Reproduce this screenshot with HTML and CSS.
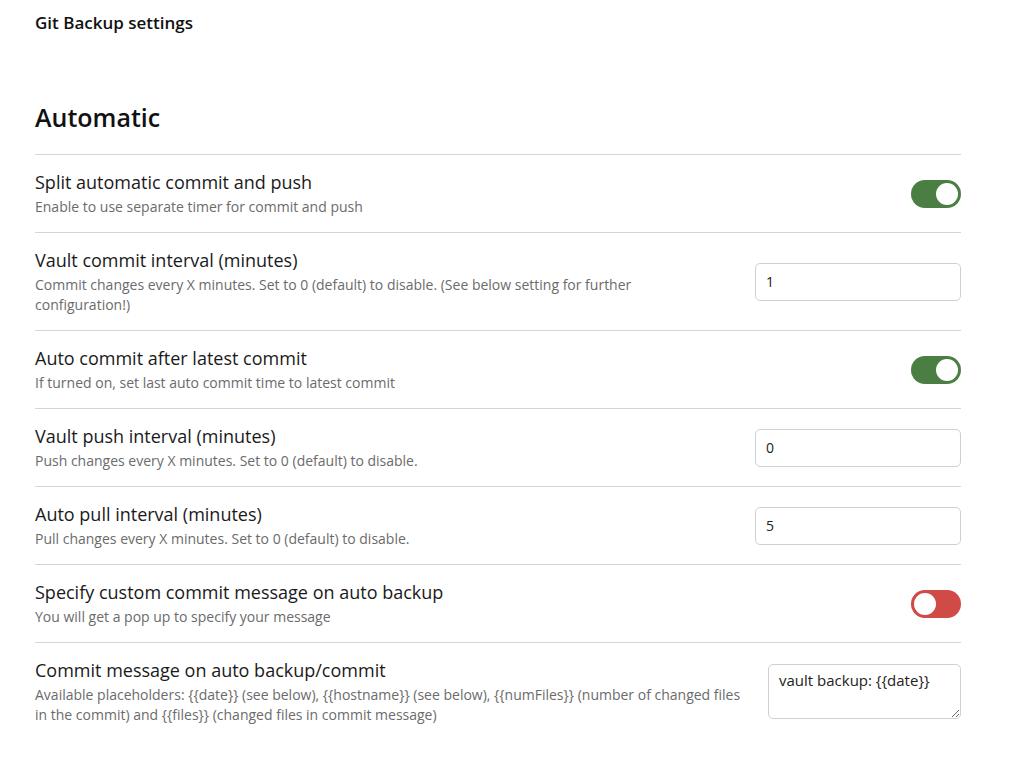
FILE: index.html
```html
<!DOCTYPE html>
<html lang="en">
<head>
<meta charset="utf-8">
<title>Git Backup settings</title>
<link rel="stylesheet" href="styles.css">
</head>
<body>
<div class="page">
  <div class="page-title">Git Backup settings</div>
  <h2 class="section">Automatic</h2>

  <div class="setting">
    <div class="info">
      <div class="name">Split automatic commit and push</div>
      <div class="desc">Enable to use separate timer for commit and push</div>
    </div>
    <div class="control"><div class="toggle on"><span class="knob"></span></div></div>
  </div>

  <div class="setting">
    <div class="info">
      <div class="name">Vault commit interval (minutes)</div>
      <div class="desc">Commit changes every X minutes. Set to 0 (default) to disable. (See below setting for further configuration!)</div>
    </div>
    <div class="control"><input class="text" type="text" value="1"></div>
  </div>

  <div class="setting">
    <div class="info">
      <div class="name">Auto commit after latest commit</div>
      <div class="desc">If turned on, set last auto commit time to latest commit</div>
    </div>
    <div class="control"><div class="toggle on"><span class="knob"></span></div></div>
  </div>

  <div class="setting">
    <div class="info">
      <div class="name">Vault push interval (minutes)</div>
      <div class="desc">Push changes every X minutes. Set to 0 (default) to disable.</div>
    </div>
    <div class="control"><input class="text" type="text" value="0"></div>
  </div>

  <div class="setting">
    <div class="info">
      <div class="name">Auto pull interval (minutes)</div>
      <div class="desc">Pull changes every X minutes. Set to 0 (default) to disable.</div>
    </div>
    <div class="control"><input class="text" type="text" value="5"></div>
  </div>

  <div class="setting">
    <div class="info">
      <div class="name">Specify custom commit message on auto backup</div>
      <div class="desc">You will get a pop up to specify your message</div>
    </div>
    <div class="control"><div class="toggle off"><span class="knob"></span></div></div>
  </div>

  <div class="setting">
    <div class="info">
      <div class="name">Commit message on auto backup/commit</div>
      <div class="desc">Available placeholders: {{date}} (see below), {{hostname}} (see below), {{numFiles}} (number of changed files in the commit) and {{files}} (changed files in commit message)</div>
    </div>
    <div class="control"><textarea class="area">vault backup: {{date}}</textarea></div>
  </div>
</div>
</body>
</html>
```
FILE: styles.css
```css
html, body {
  margin: 0;
  padding: 0;
  background: #ffffff;
}
body {
  font-family: "Open Sans", "Noto Sans", sans-serif;
  color: #222222;
}
.page {
  width: 926px;
  padding: 10px 0 0 35px;
}
.page-title {
  font-size: 17px;
  font-weight: 600;
  line-height: 26px;
  color: #111;
}
.section {
  margin: 63px 0 0 0;
  font-size: 25px;
  font-weight: 600;
  line-height: 36px;
  color: #111;
  padding-bottom: 19px;
}
.setting {
  display: flex;
  align-items: center;
  border-top: 1px solid #d5d5d5;
  padding: 15px 0;
  gap: 27px;
}
.info {
  flex: 1;
  min-width: 0;
}
.name {
  font-size: 18px;
  line-height: 24px;
  color: #1a1a1a;
  margin-bottom: 3px;
}
.desc {
  font-size: 14px;
  line-height: 20px;
  color: #6b6b6b;
}
.control {
  display: flex;
  justify-content: flex-end;
  flex-shrink: 0;
}
.toggle {
  width: 50px;
  height: 28px;
  border-radius: 14px;
  position: relative;
  box-sizing: border-box;
}
.toggle.on { background: #4a7e42; }
.toggle.off { background: #d04a48; }
.knob {
  position: absolute;
  top: 3px;
  width: 22px;
  height: 22px;
  border-radius: 50%;
  background: #fff;
}
.toggle.on .knob { right: 3px; }
.toggle.off .knob { left: 3px; }
.text {
  width: 206px;
  height: 38px;
  box-sizing: border-box;
  border: 1px solid #d0d0d0;
  border-radius: 5px;
  padding: 0 10px;
  font-family: "Open Sans", "Noto Sans", sans-serif;
  font-size: 14px;
  color: #222;
  background: #fff;
  outline: none;
}
.area {
  width: 193px;
  height: 55px;
  box-sizing: border-box;
  border: 1px solid #d0d0d0;
  border-radius: 5px;
  padding: 5px 10px;
  font-family: "Open Sans", "Noto Sans", sans-serif;
  font-size: 15px;
  line-height: 20px;
  color: #222;
  background: #fff;
  outline: none;
  resize: vertical;
  display: block;
}
```
